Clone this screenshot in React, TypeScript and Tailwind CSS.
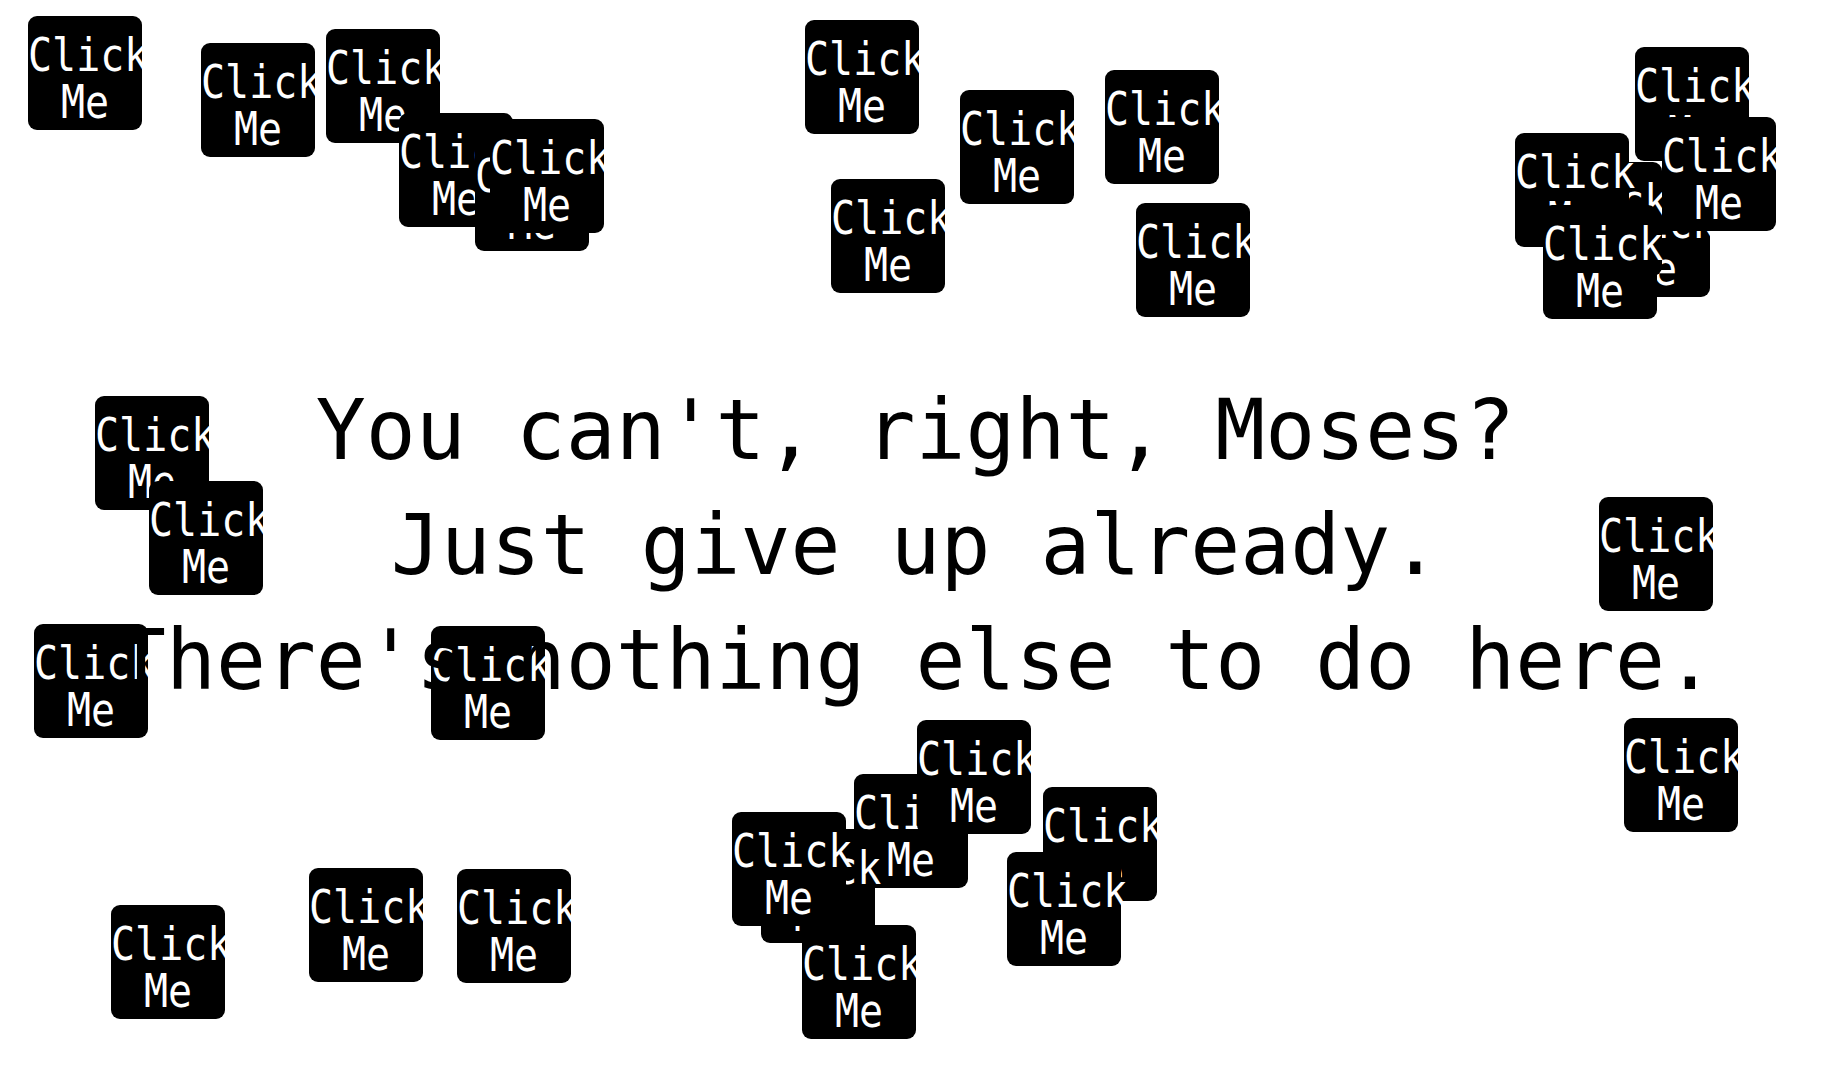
import React from 'react';

const buttons: { x: number; y: number }[] = [
  { x: 28, y: 16 },
  { x: 201, y: 43 },
  { x: 326, y: 29 },
  { x: 399, y: 113 },
  { x: 475, y: 137 },
  { x: 490, y: 119 },
  { x: 805, y: 20 },
  { x: 831, y: 179 },
  { x: 960, y: 90 },
  { x: 1105, y: 70 },
  { x: 1136, y: 203 },
  { x: 1596, y: 183 },
  { x: 1548, y: 162 },
  { x: 1515, y: 133 },
  { x: 1635, y: 47 },
  { x: 1662, y: 117 },
  { x: 1543, y: 205 },
  { x: 95, y: 396 },
  { x: 149, y: 481 },
  { x: 34, y: 624 },
  { x: 431, y: 626 },
  { x: 1599, y: 497 },
  { x: 1624, y: 718 },
  { x: 111, y: 905 },
  { x: 309, y: 868 },
  { x: 457, y: 869 },
  { x: 854, y: 774 },
  { x: 917, y: 720 },
  { x: 761, y: 829 },
  { x: 732, y: 812 },
  { x: 802, y: 925 },
  { x: 1043, y: 787 },
  { x: 1007, y: 852 },
];

const mono = "font-['DejaVu_Sans_Mono',monospace]";

function RunawayButton({ x, y }: { x: number; y: number }) {
  return (
    <button
      className={`absolute w-[114px] h-[114px] p-0 pt-[10px] rounded-[9px] bg-black text-white ${mono}`}
      style={{ left: x, top: y }}
    >
      <span className="block w-[134px] -ml-[10px] scale-x-[0.85] text-center text-[47px] leading-[47px]">
        Click Me
      </span>
    </button>
  );
}

export default function App() {
  return (
    <div className="relative w-full h-screen overflow-hidden bg-white">
      {buttons.map((b, i) => (
        <RunawayButton key={i} x={b.x} y={b.y} />
      ))}
      <div className="relative z-10 flex h-full items-center justify-center pt-[10px] pointer-events-none">
        <p className={`text-center text-black text-[83px] leading-[115px] ${mono}`}>
          You can't, right, Moses?
          <br />
          Just give up already.
          <br />
          There's nothing else to do here.
        </p>
      </div>
    </div>
  );
}
